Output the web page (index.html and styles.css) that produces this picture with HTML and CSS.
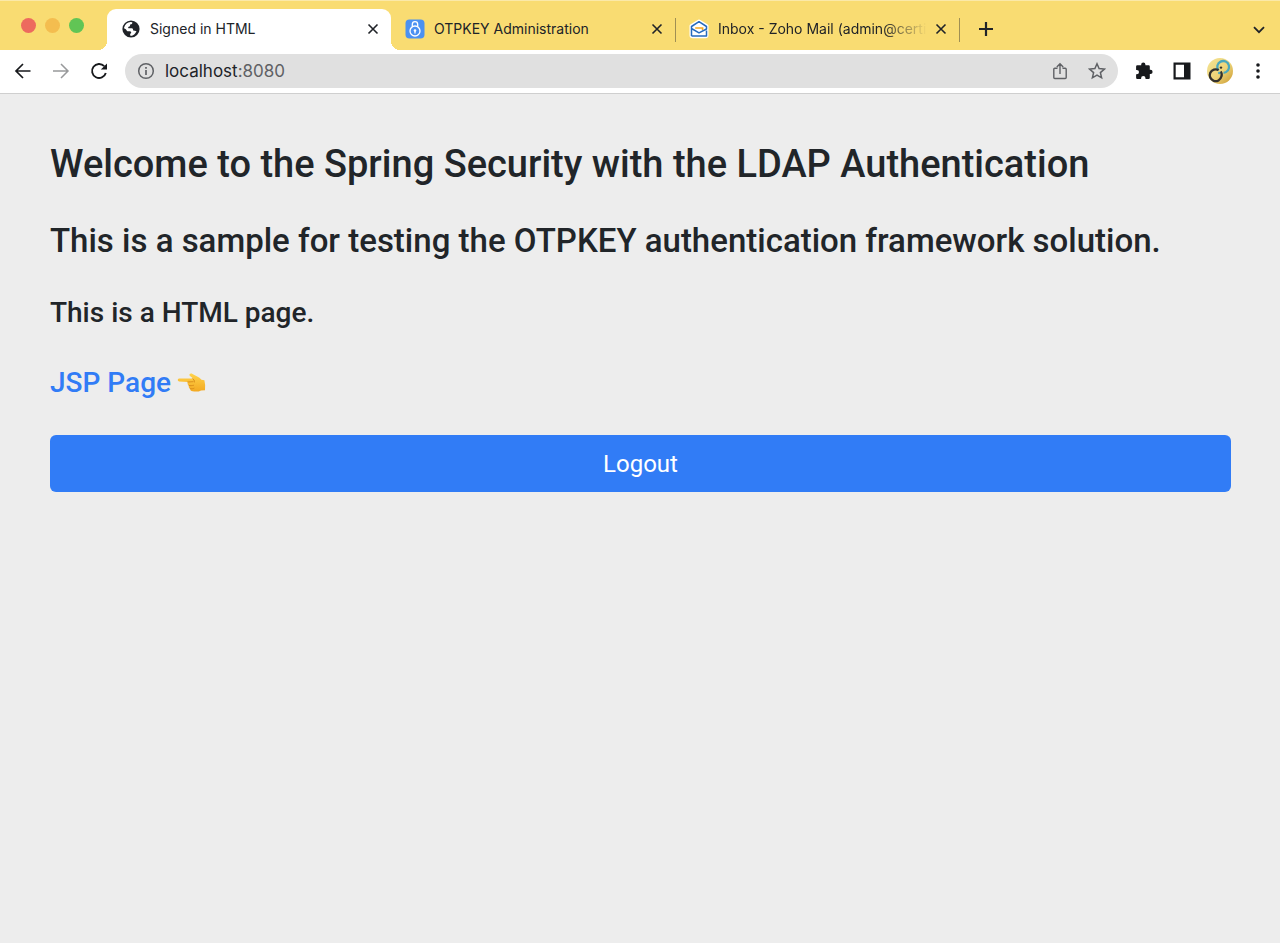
FILE: index.html
```html
<!DOCTYPE html>
<html lang="en">
<head>
<meta charset="utf-8">
<meta name="viewport" content="width=device-width, initial-scale=1">
<title>Signed in HTML</title>
<link rel="stylesheet" href="styles.css">
</head>
<body>
<header class="browser">
  <div class="tab-strip">
    <div class="window-controls">
      <button class="dot dot-close" aria-label="Close window"></button>
      <button class="dot dot-minimize" aria-label="Minimize window"></button>
      <button class="dot dot-zoom" aria-label="Zoom window"></button>
    </div>
    <div class="tabs">
      <div class="tab tab-active">
        <svg class="favicon" viewBox="0 0 20 20" aria-hidden="true"><circle cx="10" cy="10" r="8.6" fill="#202328"/><path d="M3.2 8.2C4 5.2 6.500 3.200 9.500 3L11.300 3.300C11.500 4.800 10.600 5.500 9.200 5.600L8.900 7.200L7.200 7.900L7.300 9.300H10.800C12 9.400 12.100 10.500 12.200 11.500L13.900 11.700L15.500 12.300C14.300 15 12.500 16.700 9.700 17L9.100 15.700C9.200 14.500 10 14.200 10.300 13.200L9.200 12.300H6.700C5.600 12.100 5.400 10.800 4.800 10.300L3 9.200Z" fill="#fff"/><path d="M13.300 4.300C15.600 5.600 16.900 7.500 16.900 10.200L15.300 10.100L14.900 8.600L13 8.200L12.300 6.800Z" fill="#202328"/></svg>
        <span class="tab-title">Signed in HTML</span>
        <button class="tab-close" aria-label="Close tab"><svg viewBox="0 0 12 12"><path d="M1.500 1.500L10.500 10.500M10.500 1.500L1.500 10.500"/></svg></button>
      </div>
      <div class="tab">
        <svg class="favicon" viewBox="0 0 20 20" aria-hidden="true"><rect x="0.500" y="0.500" width="19" height="19" rx="4" fill="#4b91f2"/><g fill="none" stroke="#fff" stroke-width="1.300"><circle cx="10" cy="12" r="5"/><path d="M7.300 7.800V5.400a2.700 2.700 0 0 1 5.400 0V7.800"/><path d="M10 12v2.500"/></g><circle cx="10" cy="11.500" r="1.300" fill="#fff"/></svg>
        <span class="tab-title">OTPKEY Administration</span>
        <button class="tab-close" aria-label="Close tab"><svg viewBox="0 0 12 12"><path d="M1.500 1.500L10.500 10.500M10.500 1.500L1.500 10.500"/></svg></button>
      </div>
      <div class="tab tab-divided">
        <svg class="favicon" viewBox="0 0 20 20" aria-hidden="true"><path d="M10 2.200L2.200 7v9a1.500 1.500 0 0 0 1.500 1.500h12.600a1.500 1.500 0 0 0 1.500-1.500V7Z" fill="#fff" stroke="#fff" stroke-width="3.400" stroke-linejoin="round"/><path d="M2.500 17V7.500L10 2.700L17.500 7.500V10L10 13.800L2.500 9.500M2.500 17H17.500V11.500" fill="none" stroke="#266abd" stroke-width="1.500" stroke-linejoin="round"/><path d="M6.200 9h7.400v2" fill="none" stroke="#f6a821" stroke-width="1.600"/></svg>
        <span class="tab-title tab-title-faded">Inbox - Zoho Mail (admin@certi</span>
        <button class="tab-close" aria-label="Close tab"><svg viewBox="0 0 12 12"><path d="M1.500 1.500L10.500 10.500M10.500 1.500L1.500 10.500"/></svg></button>
      </div>
      <div class="new-tab-slot">
        <button class="icon-button" aria-label="New tab"><svg width="16" height="16" viewBox="0 0 16 16"><path d="M8 1V15M1 8H15" stroke="#202328" stroke-width="2.200"/></svg></button>
      </div>
    </div>
    <button class="icon-button" aria-label="Search tabs"><svg width="12" height="8" viewBox="0 0 12 8"><path d="M1 1.200L6 6.200L11 1.200" fill="none" stroke="#202328" stroke-width="1.800"/></svg></button>
  </div>
  <div class="toolbar">
    <nav class="nav-buttons" aria-label="History">
      <button class="icon-button" aria-label="Back"><svg width="18" height="18" viewBox="0 0 18 18"><path d="M16.500 9H2.500M9 2L2 9L9 16" fill="none" stroke="#17191c" stroke-width="1.700"/></svg></button>
      <button class="icon-button" aria-label="Forward"><svg width="18" height="18" viewBox="0 0 18 18"><path d="M1 9H15.500M9 2L16 9L9 16" fill="none" stroke="#98999b" stroke-width="1.500"/></svg></button>
      <button class="icon-button" aria-label="Reload"><svg width="18" height="18" viewBox="0 0 18 18"><path d="M15.800 11A7 7 0 1 1 14.200 4.200" fill="none" stroke="#17191c" stroke-width="1.900"/><path d="M17 1.400V7.600H10.800Z" fill="#17191c"/></svg></button>
    </nav>
    <div class="address-bar">
      <svg width="18" height="18" viewBox="0 0 18 18" aria-hidden="true"><circle cx="9" cy="9" r="7.300" fill="none" stroke="#5f6165" stroke-width="1.500"/><path d="M9 8V13M9 5V6.700" stroke="#5f6165" stroke-width="1.700"/></svg>
      <a class="address" href="#">localhost<span class="port">:8080</span></a>
      <button class="icon-button" aria-label="Share"><svg width="16" height="18" viewBox="0 0 16 18"><path d="M5.500 6.200H2.800A1 1 0 0 0 1.800 7.200V15.500A1 1 0 0 0 2.800 16.500H13.200A1 1 0 0 0 14.200 15.500V7.200A1 1 0 0 0 13.200 6.200H10.500M8 12V1.800M4.800 5L8 1.800L11.200 5" fill="none" stroke="#5f6165" stroke-width="1.400"/></svg></button>
      <button class="icon-button" aria-label="Bookmark"><svg width="18" height="18" viewBox="0 0 18 18"><path d="M9 1.800L11.100 6.600L16.400 7.100L12.400 10.600L13.600 15.800L9 13.100L4.400 15.800L5.600 10.600L1.600 7.100L6.900 6.600Z" fill="none" stroke="#5f6165" stroke-width="1.500"/></svg></button>
    </div>
    <div class="actions">
      <button class="icon-button" aria-label="Extensions"><svg width="18" height="18" viewBox="0 0 18 18"><path d="M2.300 3.300H6.200V2.600a2.100 2.100 0 0 1 4.200 0V3.300H13.600a1.200 1.200 0 0 1 1.200 1.200V7.800H15.500a2.100 2.100 0 0 1 0 4.200H14.800V15.800a1.200 1.200 0 0 1-1.200 1.200H10.500V16.200a2.200 2.200 0 0 0-4.400 0V17H2.300a1.200 1.200 0 0 1-1.200-1.200V12.300H1.800a2.200 2.200 0 0 0 0-4.400H1.100V4.500A1.200 1.200 0 0 1 2.300 3.300Z" fill="#17191c"/></svg></button>
      <button class="icon-button" aria-label="Side panel"><svg width="18" height="18" viewBox="0 0 18 18"><path d="M0.500 0.500H17.500V17.500H0.500ZM2.700 2.700V15.300H11V2.700Z" fill="#17191c" fill-rule="evenodd"/></svg></button>
      <button class="icon-button" aria-label="Profile"><svg width="26" height="26" viewBox="0 0 26 26"><defs><linearGradient id="gold" x1="0" y1="0" x2="1" y2="1"><stop offset="0" stop-color="#f4e394"/><stop offset=".55" stop-color="#eed477"/><stop offset="1" stop-color="#c9972e"/></linearGradient></defs><circle cx="13" cy="13" r="13" fill="url(#gold)"/><g fill="none" stroke-width="2.300"><path d="M11.500 12.500A5.900 5.900 0 1 1 16.500 14.800" stroke="#4aa8bd"/><path d="M11.600 12.100A5.900 5.900 0 1 0 14.400 18.600Q15.400 15.600 13.600 13.400" stroke="#34322e"/></g><circle cx="14" cy="9.600" r="1.200" fill="#34322e"/><circle cx="12.200" cy="15" r="1.200" fill="#4aa8bd"/></svg></button>
      <button class="icon-button" aria-label="Menu"><svg width="4" height="18" viewBox="0 0 4 18" fill="#17191c"><circle cx="2" cy="3" r="1.800"/><circle cx="2" cy="9" r="1.800"/><circle cx="2" cy="15" r="1.800"/></svg></button>
    </div>
  </div>
</header>
<main class="page">
  <h1 class="title">Welcome to the Spring Security with the LDAP Authentication</h1>
  <h2 class="subtitle">This is a sample for testing the OTPKEY authentication framework solution.</h2>
  <h3 class="note">This is a HTML page.</h3>
  <h3 class="note"><a class="page-link" href="#">JSP Page
    <svg class="hand" viewBox="0 0 30 22" role="img" aria-label="pointing left"><defs><linearGradient id="skin" x1="0" y1="0" x2="0" y2="1"><stop offset="0" stop-color="#ffd34a"/><stop offset="1" stop-color="#f3a922"/></linearGradient></defs><path d="M2 6.600C0.300 6.700 0.300 9.300 2 9.400L10.800 10C10.200 11.600 10.700 13 12 13.500C11.300 15 12 16.300 13.200 16.700C13 18.200 14 19.200 15.600 19.300C18.500 19.800 22 19.700 24 18.400L28 18.200Q28.600 13 27.400 8.300L24.500 7.700C22 4.800 18.500 4 15.500 2C13.200 0.700 11.500 2.600 13 4.100L16.200 6.600Z" fill="url(#skin)"/><path d="M10.800 10L16 9.700M12 13.500C13.500 13.900 15 13.600 16.500 13.300M13.200 16.700C14.500 17 16 16.800 17 16.300M15.800 6.600Q17.700 7.600 17.500 10" fill="none" stroke="#d78a18" stroke-width="0.900" stroke-linecap="round"/></svg></a></h3>
  <button class="logout" type="submit">Logout</button>
</main>
</body>
</html>
```
FILE: styles.css
```css
* { box-sizing: border-box; }

body {
  margin: 0;
  min-height: 100vh;
  background: #ededed;
  color: #212529;
  font-family: Inter, "Liberation Sans", sans-serif;
}

button {
  margin: 0;
  padding: 0;
  border: 0;
  background: none;
  font: inherit;
  cursor: pointer;
}

svg { display: block; flex: none; }

/* Tab strip */
.browser { border-bottom: 1px solid #cfcfcf; }

.tab-strip {
  display: flex;
  align-items: stretch;
  height: 50px;
  padding-right: 15px;
  background: #f9dc72;
  border-top: 1px solid #fbe9a8;
}

.window-controls {
  display: flex;
  gap: 9px;
  flex: none;
  width: 107px;
  padding: 17px 0 0 21px;
}

.dot { width: 15px; height: 15px; border-radius: 50%; }
.dot-close { background: #ed6a5e; }
.dot-minimize { background: #f4bd4f; }
.dot-zoom { background: #61c555; }

.tabs { display: flex; flex: 1; min-width: 0; padding-top: 8px; }

.tab {
  position: relative;
  display: flex;
  align-items: center;
  flex: 0 1 284px;
  min-width: 0;
  padding: 0 12px 1px 14px;
}

.tab-active {
  background: #fff;
  border-radius: 9px 9px 0 0;
}

.tab-active::before,
.tab-active::after {
  content: "";
  position: absolute;
  bottom: 0;
  width: 9px;
  height: 9px;
}
.tab-active::before { right: 100%; background: radial-gradient(circle at 0 0, transparent 9px, #fff 9px); }
.tab-active::after { left: 100%; background: radial-gradient(circle at 100% 0, transparent 9px, #fff 9px); }

.tab-divided::before,
.new-tab-slot::before {
  content: "";
  position: absolute;
  left: 0;
  top: 9px;
  width: 1px;
  height: 24px;
  background: #a08f53;
}

.favicon { width: 20px; height: 20px; }

.tab-title {
  flex: 1;
  min-width: 0;
  margin: 0 8px 0 9px;
  overflow: hidden;
  white-space: nowrap;
  color: #202328;
  font-size: 14px;
  line-height: 20px;
}
.tab-title-faded { mask-image: linear-gradient(to right, #000 78%, transparent); }

.tab-close { width: 12px; height: 12px; }
.tab-close path { fill: none; stroke: #202328; stroke-width: 1.6; }

.new-tab-slot { position: relative; display: flex; align-items: center; padding: 0 0 1px 19px; }
.tab-strip > .icon-button { padding-top: 8px; }

/* Toolbar */
.icon-button { display: flex; align-items: center; justify-content: center; flex: none; }

.toolbar {
  display: flex;
  align-items: center;
  height: 43px;
  padding: 0 9px 1px 14px;
  background: #fff;
}

.nav-buttons { display: flex; gap: 20px; }

.address-bar {
  display: flex;
  align-items: center;
  flex: 1;
  gap: 20px;
  height: 34px;
  margin: 0 13px 0 17px;
  padding: 0 12px;
  border-radius: 17px;
  background: #e0e0e0;
}
.address-bar > svg { margin-right: -10px; }

.address {
  flex: 1;
  color: #202328;
  font-size: 17px;
  line-height: 20px;
  text-decoration: none;
}
.port { color: #5f6165; }

.actions { display: flex; align-items: center; gap: 12px; }
.actions .icon-button { width: 26px; }

/* Page */
.page { padding: 47px 49px 48px 50px; }

.title, .subtitle, .note { margin: 0; font-family: Roboto, Inter, sans-serif; font-weight: 500; }
.title { margin-bottom: 34px; font-size: 38px; line-height: 46px; }
.subtitle { margin-bottom: 34px; font-size: 33px; line-height: 40px; }
.note { margin-bottom: 34px; font-size: 28px; line-height: 36px; }

.page-link {
  display: inline-flex;
  align-items: center;
  gap: 6px;
  color: #317cf6;
  text-decoration: none;
}
.hand { width: 30px; height: 22px; }

.logout {
  display: block;
  width: 100%;
  padding: 14px 20px 12px;
  border-radius: 6px;
  background: #317cf6;
  color: #fff;
  font-family: Roboto, Inter, sans-serif;
  font-size: 24px;
  line-height: 31px;
}
```
